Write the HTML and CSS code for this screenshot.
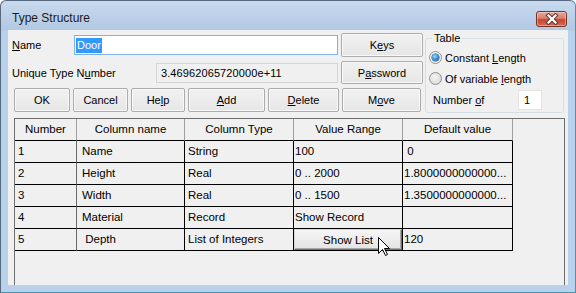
FILE: index.html
```html
<!DOCTYPE html>
<html>
<head>
<meta charset="utf-8">
<title>Type Structure</title>
<link rel="stylesheet" href="styles.css">
</head>
<body>
<div class="win">
  <div class="titlebar">
    <span class="title">Type Structure</span>
    <span class="close">
      <svg width="14" height="12" viewBox="0 0 14 12">
        <path d="M3.5 2.5 L10.5 9.5 M10.5 2.5 L3.5 9.5" stroke="#5b3a36" stroke-width="4.2" stroke-linecap="square" fill="none"/>
        <path d="M3.5 2.5 L10.5 9.5 M10.5 2.5 L3.5 9.5" stroke="#ffffff" stroke-width="2.2" stroke-linecap="square" fill="none"/>
      </svg>
    </span>
  </div>
  <div class="client">
    <div class="top">
      <div class="left">
        <div class="row row1">
          <label class="lbl lbl-name"><u>N</u>ame</label>
          <div class="field name-field"><span class="sel">Door</span></div>
          <button class="btn side">K<u>e</u>ys</button>
        </div>
        <div class="row row2">
          <label class="lbl lbl-uniq">Unique Type N<u>u</u>mber</label>
          <div class="field ro">3.46962065720000e+11</div>
          <button class="btn side pw">P<u>a</u>ssword</button>
        </div>
        <div class="row row3">
          <button class="btn b-ok">OK</button>
          <button class="btn b-cancel">Cancel</button>
          <button class="btn b-help">He<u>l</u>p</button>
          <button class="btn b-add"><u>A</u>dd</button>
          <button class="btn b-del"><u>D</u>elete</button>
          <button class="btn b-move">M<u>o</u>ve</button>
        </div>
      </div>
      <fieldset class="group">
        <legend>Table</legend>
        <div class="opt first"><span class="radio on"></span><span class="otext">Constant <u>L</u>ength</span></div>
        <div class="opt"><span class="radio"></span><span class="otext">Of variable <u>l</u>ength</span></div>
        <div class="opt num"><span class="otext">Number <u>o</u>f</span><span class="field small">1</span></div>
      </fieldset>
    </div>
    <div class="grid">
      <div class="c h">Number</div>
      <div class="c h">Column name</div>
      <div class="c h">Column Type</div>
      <div class="c h">Value Range</div>
      <div class="c h">Default value</div>

      <div class="c c1">1</div>
      <div class="c c2">Name</div>
      <div class="c c3">String</div>
      <div class="c c4">100</div>
      <div class="c c5 pre"> 0</div>

      <div class="c c1">2</div>
      <div class="c c2">Height</div>
      <div class="c c3">Real</div>
      <div class="c c4">0 .. 2000</div>
      <div class="c c5">1.8000000000000...</div>

      <div class="c c1">3</div>
      <div class="c c2">Width</div>
      <div class="c c3">Real</div>
      <div class="c c4">0 .. 1500</div>
      <div class="c c5">1.3500000000000...</div>

      <div class="c c1">4</div>
      <div class="c c2">Material</div>
      <div class="c c3">Record</div>
      <div class="c c4">Show Record</div>
      <div class="c c5"></div>

      <div class="c c1">5</div>
      <div class="c c2 pre"> Depth</div>
      <div class="c c3">List of Integers</div>
      <div class="c c4 btncell"><button class="gbtn">Show List</button><svg class="cursor" width="13" height="20" viewBox="0 0 13 20"><path d="M0.5 0.5 L0.5 16.5 L4.5 12.5 L7.5 18.5 L9.5 17.5 L6.5 11.5 L11.5 11.5 Z" fill="#ffffff" stroke="#000000" stroke-width="1" stroke-linejoin="miter"/></svg></div>
      <div class="c c5">120</div>
    </div>
  </div>
</div>
</body>
</html>
```
FILE: styles.css
```css
* { box-sizing: border-box; }
html, body { margin: 0; padding: 0; background: #ffffff; }
body {
  font-family: "Liberation Sans", Arial, sans-serif;
  font-size: 11px;
  color: #000;
}
u { text-decoration: underline; text-underline-offset: 1px; }

.win {
  width: 576px;
  height: 293px;
  border: 1px solid #56697f;
  border-right-color: #4a92ad;
  border-bottom-color: #4a92ad;
  border-radius: 6px 6px 0 0;
  background: linear-gradient(to bottom, #c7d9ed 0, #b2c9e3 29px, #b9d1ea 30px, #b9d1ea 100%);
  padding: 0 7px 7px 7px;
  display: flex;
  flex-direction: column;
}

.titlebar {
  height: 29px;
  flex: none;
  display: flex;
  justify-content: space-between;
  align-items: flex-start;
}
.title {
  font-size: 12px;
  line-height: 14px;
  margin: 10px 0 0 4px;
  color: #1b1b1b;
}
.close {
  width: 31px;
  height: 16px;
  margin: 10px 1px 0 0;
  border: 1px solid #74332a;
  border-radius: 3px;
  background: linear-gradient(to bottom, #e9a899 0, #dc7f6b 45%, #c8452e 55%, #d36c55 100%);
  box-shadow: inset 0 0 0 1px rgba(255, 255, 255, 0.35);
  display: flex;
  align-items: center;
  justify-content: center;
}

.client {
  height: 255px;
  flex: none;
  background: #f0f0f0;
  overflow: hidden;
  display: flex;
  flex-direction: column;
}

.top {
  height: 82px;
  flex: none;
  display: flex;
  align-items: flex-start;
  gap: 2px;
}
.left {
  width: 415px;
  flex: none;
  display: flex;
  flex-direction: column;
}
.row { display: flex; align-items: center; flex: none; }
.row1 { margin-top: 3px; height: 24px; padding-left: 4px; }
.row2 { margin-top: 4px; height: 23px; padding-left: 4px; }
.row3 { margin-top: 4px; height: 24px; padding-left: 6px; gap: 3px; }

.lbl { flex: none; white-space: nowrap; }
.lbl-name { width: 62px; }
.lbl-uniq { width: 144px; }

.field {
  height: 20px;
  background: #fff;
  border: 1px solid #c5c8cc;
  display: flex;
  align-items: center;
  flex: none;
}
.name-field {
  width: 264px;
  border-color: #7fb3e6;
  padding-left: 1px;
}
.sel {
  background: #3399ff;
  color: #fff;
  line-height: 15px;
  height: 15px;
  padding: 0 1px;
}
.ro {
  width: 182px;
  background: #f0f0f0;
  border-color: #d3d5d8;
  padding-left: 4px;
  letter-spacing: 0.1px;
}

.btn {
  font-family: inherit;
  font-size: 11px;
  color: #000;
  border: 1px solid #acacac;
  border-radius: 2px;
  background: linear-gradient(to bottom, #f1f1f1, #e6e6e6);
  box-shadow: inset 0 0 0 1px #f8f8f8;
  padding: 0;
  height: 24px;
  flex: none;
}
.side { width: 82px; margin-left: 3px; }
.pw { height: 23px; }
.b-ok { width: 56px; }
.b-cancel { width: 55px; }
.b-help { width: 54px; }
.b-add { width: 77px; }
.b-del { width: 71px; }
.b-move { width: 79px; }

.group {
  margin: 2px 0 0 0;
  padding: 0;
  min-width: 0;
  width: 139px;
  height: 81px;
  border: 1px solid #d5dfe6;
  border-radius: 3px;
}
.group legend {
  margin-left: 6px;
  padding: 0 2px;
  line-height: 13px;
  font-size: 11px;
}
.opt {
  height: 21px;
  display: flex;
  align-items: center;
  padding-left: 3px;
  white-space: nowrap;
}
.opt.first { margin-top: 2px; }
.otext { white-space: nowrap; }
.radio {
  width: 13px;
  height: 13px;
  flex: none;
  border-radius: 50%;
  border: 1px solid #8f9091;
  background: radial-gradient(circle at 45% 40%, #f4f4f4 0, #e2e2e2 55%, #cfcfcf 100%);
  margin-right: 3px;
  position: relative;
}
.radio.on {
  background: radial-gradient(circle at 50% 50%, #ffffff 0, #f0f0f0 100%);
}
.radio.on::after {
  content: "";
  position: absolute;
  left: 2px;
  top: 2px;
  width: 7px;
  height: 7px;
  border-radius: 50%;
  background: radial-gradient(circle at 40% 35%, #9ad9ff 0, #2c86d0 55%, #124f8d 100%);
  box-shadow: 0 0 0 0.5px #1a4b7a;
}
.num { padding-left: 7px; }
.small {
  width: 24px;
  margin-left: auto;
  margin-right: 21px;
  padding-left: 5px;
  border-color: #e3e3e3;
}

.grid {
  margin: 6px 0 0 6px;
  width: 551px;
  height: 175px;
  flex: none;
  border: 1px solid #6e6e6e;
  display: grid;
  grid-template-columns: 62px 108px 109px 109px 110px;
  grid-auto-rows: 22px;
  align-content: start;
  font-size: 11.5px;
}
.c {
  border-right: 1px solid #000;
  border-bottom: 1px solid #000;
  line-height: 21px;
  white-space: nowrap;
  overflow: hidden;
}
.pre { white-space: pre; }
.c1 { padding-left: 3px; border-right-color: #6a6a6a; }
.c2 { padding-left: 5px; }
.c3 { padding-left: 3px; }
.c4 { padding-left: 1px; }
.c5 { padding-left: 1px; }
.h {
  text-align: center;
  padding: 0;
  border-right-color: #a0a0a0;
}

.btncell { position: relative; padding: 0; overflow: visible; }
.gbtn {
  display: block;
  width: 100%;
  height: 100%;
  font-family: inherit;
  font-size: 11.5px;
  color: #000;
  padding: 0;
  border: 1px solid;
  border-color: #d8d8d8 #6f6f6f #6f6f6f #d8d8d8;
  background: linear-gradient(to bottom, #f5f5f5, #e4e4e4);
  box-shadow: inset -1px -1px 0 #a8a8a8;
}
.cursor {
  position: absolute;
  left: 84px;
  top: 8px;
}
```
